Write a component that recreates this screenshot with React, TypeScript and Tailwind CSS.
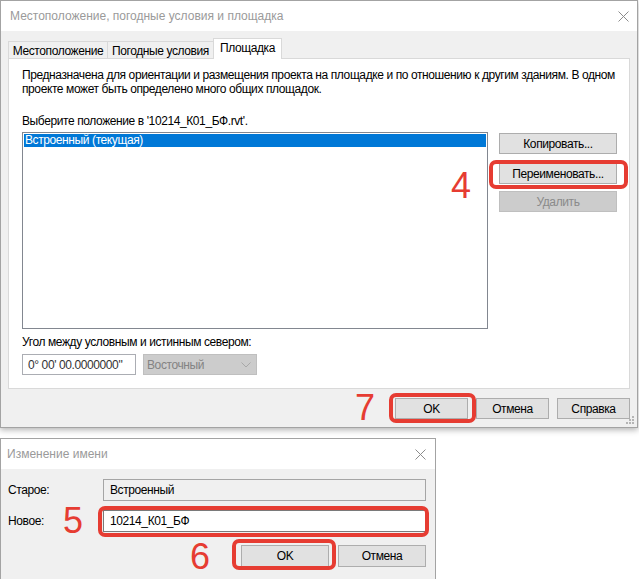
import React from "react";

const font = { fontFamily: '"Liberation Sans", Arial, sans-serif' };

function CloseX({ color }: { color: string }) {
  return (
    <svg width="11" height="11" viewBox="0 0 11 11">
      <path d="M0.5 0.5 L10.5 10.5 M10.5 0.5 L0.5 10.5" stroke={color} strokeWidth="1" fill="none" />
    </svg>
  );
}

function Btn({ label, w, h = "h-[21px]", disabled = false }: { label: string; w: string; h?: string; disabled?: boolean }) {
  return (
    <div
      className={`${w} ${h} flex items-center justify-center border text-[12px] whitespace-nowrap ${
        disabled ? "bg-[#cccccc] border-[#bfbfbf] text-[#8a8a8a]" : "bg-[#e1e1e1] border-[#adadad] text-black"
      }`}
    >
      {label}
    </div>
  );
}

export default function App() {
  return (
    <div className="relative w-[639px] h-[579px] overflow-hidden bg-white text-black whitespace-nowrap tracking-[-0.4px]" style={font}>
      {/* Main window */}
      <div className="relative w-[638px] h-[428px] border border-[#a3a3a3] bg-[#f0f0f0] flex flex-col shadow-[0_2px_6px_rgba(0,0,0,0.3)]">
        <div className="h-[30px] bg-white flex items-center justify-between pl-[9px] pr-[8px] shrink-0">
          <span className="text-[12px] text-[#9a9a9a] leading-none tracking-normal">Местоположение, погодные условия и площадка</span>
          <CloseX color="#8c8c8c" />
        </div>
        <div className="flex-1 flex flex-col px-[7px] pt-[7px]">
          {/* tabs */}
          <div className="flex items-end h-[20px] relative z-10">
            <div className="w-[100px] h-[17px] border border-b-0 border-[#d9d9d9] flex items-center justify-center text-[12px] leading-none pt-[1px]">
              Местоположение
            </div>
            <div className="-ml-px w-[107px] h-[17px] border border-b-0 border-[#d9d9d9] flex items-center justify-center text-[12px] leading-none pt-[1px]">
              Погодные условия
            </div>
            <div className="-ml-px relative top-[1px] w-[69px] h-[21px] bg-white border border-b-0 border-[#d9d9d9] flex items-center justify-center text-[12px] leading-none pb-[2px]">
              Площадка
            </div>
          </div>
          {/* panel */}
          <div className="h-[331px] bg-white border border-[#d9d9d9] flex flex-col pl-[13px] pt-[9px] text-[12px] leading-[14px]">
            <p>Предназначена для ориентации и размещения проекта на площадке и по отношению к другим зданиям. В одном</p>
            <p>проекте может быть определено много общих площадок.</p>
            <p className="mt-[18px]">Выберите положение в '10214_К01_БФ.rvt'.</p>
            <div className="flex mt-[4px]">
              <div className="w-[466px] h-[197px] border border-[#828790] p-[1px]">
                <div className="h-[13px] bg-[#0078d7] text-white text-[12px] leading-[13px] pl-[1px]">Встроенный (текущая)</div>
              </div>
              <div className="ml-[11px] flex flex-col pt-[1px]">
                <Btn label="Копировать..." w="w-[118px]" />
                <div className="mt-[9px]">
                  <Btn label="Переименовать..." w="w-[118px]" />
                </div>
                <div className="mt-[7px]">
                  <Btn label="Удалить" w="w-[118px]" disabled />
                </div>
              </div>
            </div>
            <p className="mt-[6px]">Угол между условным и истинным севером:</p>
            <div className="flex gap-[7px] mt-[5px]">
              <div className="w-[114px] h-[21px] border border-[#abadb3] flex items-center pl-[5px] text-[12px] text-[#333]">
                0° 00' 00.0000000"
              </div>
              <div className="w-[114px] h-[21px] border border-[#bfbfbf] bg-[#cccccc] flex items-center justify-between pl-[3px] pr-[5px] text-[12px] text-[#838383]">
                <span>Восточный</span>
                <svg width="10" height="6" viewBox="0 0 10 6">
                  <path d="M0.5 0.5 L5 5 L9.5 0.5" stroke="#a8a8a8" strokeWidth="1" fill="none" />
                </svg>
              </div>
            </div>
          </div>
          {/* bottom buttons */}
          <div className="flex justify-end gap-[8px] mt-[9px]">
            <Btn label="OK" w="w-[73px]" />
            <Btn label="Отмена" w="w-[73px]" />
            <Btn label="Справка" w="w-[73px]" />
          </div>
        </div>
        {/* resize grip */}
        <svg className="absolute right-[2px] bottom-[2px]" width="9" height="9" viewBox="0 0 9 9">
          <rect x="6" y="0" width="2" height="2" fill="#b5b5b5" />
          <rect x="3" y="3" width="2" height="2" fill="#b5b5b5" />
          <rect x="6" y="3" width="2" height="2" fill="#b5b5b5" />
          <rect x="0" y="6" width="2" height="2" fill="#b5b5b5" />
          <rect x="3" y="6" width="2" height="2" fill="#b5b5b5" />
          <rect x="6" y="6" width="2" height="2" fill="#b5b5b5" />
        </svg>
      </div>

      {/* Rename dialog */}
      <div className="mt-[10px] w-[436px] h-[160px] border border-[#a3a3a3] bg-[#f0f0f0] flex flex-col">
        <div className="h-[30px] bg-white flex items-center justify-between pl-[6px] pr-[9px] shrink-0">
          <span className="text-[12px] text-[#9a9a9a] leading-none tracking-normal">Изменение имени</span>
          <CloseX color="#8c8c8c" />
        </div>
        <div className="flex flex-col pl-[7px] pr-[9px] pt-[10px] text-[12px]">
          <div className="flex items-center">
            <span className="w-[95px]">Старое:</span>
            <div className="flex-1 h-[22px] border border-[#a5a5a5] bg-[#f0f0f0] flex items-center pl-[6px]">Встроенный</div>
          </div>
          <div className="flex items-center mt-[9px]">
            <span className="w-[95px]">Новое:</span>
            <div className="flex-1 h-[22px] border border-[#7a7a7a] bg-white flex items-center pl-[6px]">10214_К01_БФ</div>
          </div>
          <div className="flex justify-end gap-[9px] mt-[13px]">
            <Btn label="OK" w="w-[88px]" h="h-[22px]" />
            <Btn label="Отмена" w="w-[88px]" h="h-[22px]" />
          </div>
        </div>
      </div>

      {/* Annotations */}
      <div className="absolute left-[489px] top-[160px] w-[139px] h-[29px] border-[4px] border-[#e63c32] rounded-[7px]" />
      <div className="absolute left-[389px] top-[393px] w-[87px] h-[30px] border-[4px] border-[#e63c32] rounded-[7px]" />
      <div className="absolute left-[98px] top-[506px] w-[331px] h-[31px] border-[4px] border-[#e63c32] rounded-[7px]" />
      <div className="absolute left-[232px] top-[539px] w-[104px] h-[31px] border-[4px] border-[#e63c32] rounded-[7px]" />

      <span className="absolute left-[451px] top-[168px] text-[36px] leading-none tracking-normal text-[#e63c32]">4</span>
      <span className="absolute left-[355px] top-[390px] text-[36px] leading-none tracking-normal text-[#e63c32]">7</span>
      <span className="absolute left-[63px] top-[503px] text-[36px] leading-none tracking-normal text-[#e63c32]">5</span>
      <span className="absolute left-[190px] top-[539px] text-[36px] leading-none tracking-normal text-[#e63c32]">6</span>
    </div>
  );
}
